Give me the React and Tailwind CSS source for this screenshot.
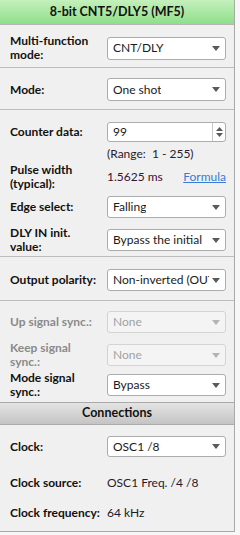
import React from 'react';

const font = { fontFamily: 'Lato, "Liberation Sans", sans-serif' };

function Caret({ disabled }) {
  return (
    <svg width="8" height="5" viewBox="0 0 8 5" className="shrink-0">
      <path d="M0 0 L8 0 L4 5 Z" fill={disabled ? '#b4b4b4' : '#5a5a5a'} />
    </svg>
  );
}

function Select({ value, disabled, h = 'h-[22px]' }) {
  return (
    <div
      className={`flex items-center justify-between gap-[3px] rounded-[3px] border pl-[5px] pr-[5px] ${h} ${
        disabled ? 'border-[#d4d4d4] bg-[#f4f4f4] text-[#a2a2a2]' : 'border-[#acacac] bg-white text-[#1a1a1a]'
      }`}
    >
      <span className="overflow-hidden whitespace-nowrap">{value}</span>
      <Caret disabled={disabled} />
    </div>
  );
}

function Label({ children, disabled }) {
  return (
    <div className={`font-bold leading-[14px] ${disabled ? 'text-[#8a8a8a]' : 'text-[#111]'}`}>{children}</div>
  );
}

// row height follows the control, two-line labels may spill over it
function Row({ label, children, disabled, className = '', h = 'h-[22px]' }) {
  return (
    <div className={`grid grid-cols-[97px_119px] items-center ${h} ${className}`}>
      <Label disabled={disabled}>{label}</Label>
      {children}
    </div>
  );
}

export default function App() {
  return (
    <div className="h-[535px] w-[240px] bg-[#f7f7f7] text-[12px]" style={font}>
      <div className="w-[235px] border-r border-b border-[#a9a9a9] bg-[#f0f0f0]">
        {/* Title */}
        <div className="flex h-[25px] items-center justify-center border-b border-[#b5b5b5] bg-gradient-to-b from-[#c4f0bc] to-[#8edf8a] text-[12.5px] font-bold text-[#111]">
          8-bit CNT5/DLY5 (MF5)
        </div>

        {/* Multi-function mode */}
        <div className="border-b border-[#bdbdbd] pl-[10px] pt-[9px] pb-[10px]">
          <Row label={<>Multi-function<br />mode:</>} h="h-[23px]">
            <Select value="CNT/DLY" h="h-[23px]" />
          </Row>
        </div>

        {/* Mode */}
        <div className="border-b border-[#bdbdbd] pl-[10px] pt-[10px] pb-[8px]">
          <Row label="Mode:" h="h-[23px]">
            <Select value="One shot" h="h-[23px]" />
          </Row>
        </div>

        {/* Counter */}
        <div className="border-b border-[#bdbdbd] pl-[10px] pt-[12px] pb-[8px]">
          <Row label="Counter data:" h="h-[20px]">
            <div className="flex h-[20px] items-stretch rounded-[3px] border border-[#acacac] bg-white">
              <span className="flex flex-1 items-center pl-[5px] text-[#1a1a1a]">99</span>
              <div className="flex w-[13px] flex-col items-center justify-center gap-[2px] border-l border-[#c8c8c8]">
                <svg width="7" height="4" viewBox="0 0 7 4"><path d="M0 4 L7 4 L3.5 0 Z" fill="#5a5a5a" /></svg>
                <svg width="7" height="4" viewBox="0 0 7 4"><path d="M0 0 L7 0 L3.5 4 Z" fill="#5a5a5a" /></svg>
              </div>
            </div>
          </Row>
          <div className="mt-[4px] h-[16px] pl-[97px] leading-[16px] text-[#2a1a2a]">(Range:&nbsp; 1 - 255)</div>
          <Row label={<>Pulse width<br />(typical):</>} h="h-[28px]" className="mt-[1px]">
            <div className="flex items-center justify-between">
              <span className="text-[#3a1030]">1.5625 ms</span>
              <span className="text-[#3b7bd4] underline">Formula</span>
            </div>
          </Row>
          <Row label="Edge select:" className="mt-[5px]">
            <Select value="Falling" />
          </Row>
          <Row label={<>DLY IN init.<br />value:</>} className="mt-[8px]">
            <Select value="Bypass the initial" />
          </Row>
        </div>

        {/* Output polarity */}
        <div className="border-b border-[#bdbdbd] pl-[10px] pt-[12px] pb-[9px]">
          <Row label="Output polarity:">
            <Select value="Non-inverted (OUT" />
          </Row>
        </div>

        {/* Sync */}
        <div className="pl-[10px] pt-[10px] pb-[9px]">
          <Row label="Up signal sync.:" disabled>
            <Select value="None" disabled />
          </Row>
          <Row label={<>Keep signal<br />sync.:</>} disabled className="mt-[8px]">
            <Select value="None" disabled />
          </Row>
          <Row label={<>Mode signal<br />sync.:</>} className="mt-[8px]">
            <Select value="Bypass" />
          </Row>
        </div>

        {/* Connections */}
        <div className="flex h-[23px] items-center justify-center border-y border-[#aaaaaa] bg-gradient-to-b from-[#e4e4e4] to-[#c4c4c4] text-[12.5px] font-bold text-[#111]">
          Connections
        </div>
        <div className="pl-[10px] pt-[11px] pb-[11px]">
          <Row label="Clock:" h="h-[21px]">
            <Select value="OSC1 /8" h="h-[21px]" />
          </Row>
          <Row label="Clock source:" h="h-[16px]" className="mt-[17px]">
            <span className="text-[#2a1a2a]">OSC1 Freq. /4 /8</span>
          </Row>
          <Row label="Clock frequency:" h="h-[16px]" className="mt-[14px]">
            <span className="text-[#1a1a2a]">64 kHz</span>
          </Row>
        </div>
      </div>
    </div>
  );
}
